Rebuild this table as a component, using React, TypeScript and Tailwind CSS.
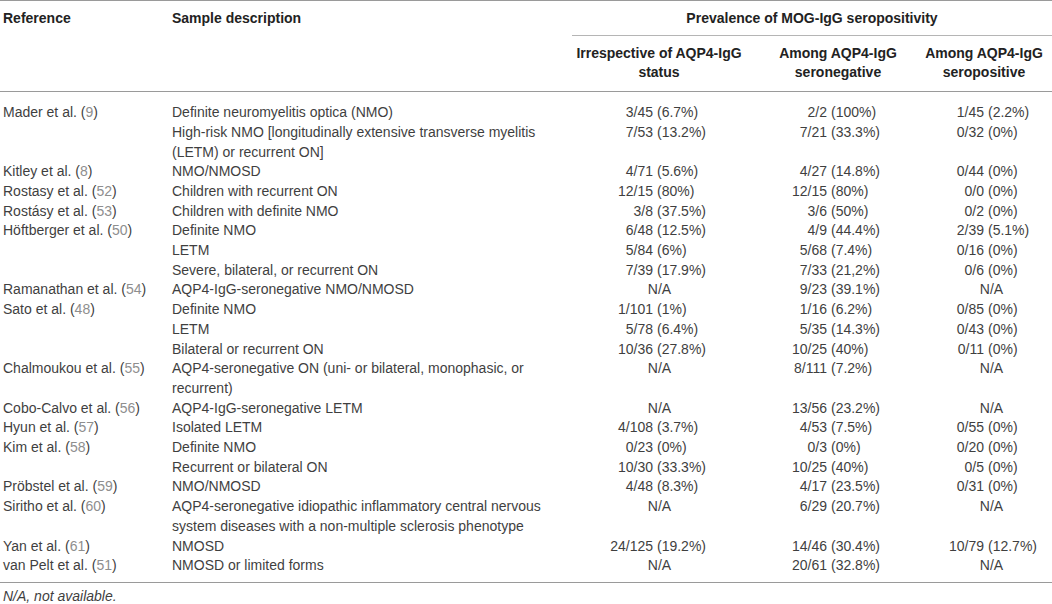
type Row = {
  author?: string;
  cite?: string;
  desc: string[];
  vals: [string, string, string];
};

const rows: Row[] = [
  { author: "Mader et al.", cite: "9", desc: ["Definite neuromyelitis optica (NMO)"], vals: ["3/45 (6.7%)", "2/2 (100%)", "1/45 (2.2%)"] },
  { desc: ["High-risk NMO [longitudinally extensive transverse myelitis", "(LETM) or recurrent ON]"], vals: ["7/53 (13.2%)", "7/21 (33.3%)", "0/32 (0%)"] },
  { author: "Kitley et al.", cite: "8", desc: ["NMO/NMOSD"], vals: ["4/71 (5.6%)", "4/27 (14.8%)", "0/44 (0%)"] },
  { author: "Rostasy et al.", cite: "52", desc: ["Children with recurrent ON"], vals: ["12/15 (80%)", "12/15 (80%)", "0/0 (0%)"] },
  { author: "Rostásy et al.", cite: "53", desc: ["Children with definite NMO"], vals: ["3/8 (37.5%)", "3/6 (50%)", "0/2 (0%)"] },
  { author: "Höftberger et al.", cite: "50", desc: ["Definite NMO"], vals: ["6/48 (12.5%)", "4/9 (44.4%)", "2/39 (5.1%)"] },
  { desc: ["LETM"], vals: ["5/84 (6%)", "5/68 (7.4%)", "0/16 (0%)"] },
  { desc: ["Severe, bilateral, or recurrent ON"], vals: ["7/39 (17.9%)", "7/33 (21,2%)", "0/6 (0%)"] },
  { author: "Ramanathan et al.", cite: "54", desc: ["AQP4-IgG-seronegative NMO/NMOSD"], vals: ["N/A", "9/23 (39.1%)", "N/A"] },
  { author: "Sato et al.", cite: "48", desc: ["Definite NMO"], vals: ["1/101 (1%)", "1/16 (6.2%)", "0/85 (0%)"] },
  { desc: ["LETM"], vals: ["5/78 (6.4%)", "5/35 (14.3%)", "0/43 (0%)"] },
  { desc: ["Bilateral or recurrent ON"], vals: ["10/36 (27.8%)", "10/25 (40%)", "0/11 (0%)"] },
  { author: "Chalmoukou et al.", cite: "55", desc: ["AQP4-seronegative ON (uni- or bilateral, monophasic, or", "recurrent)"], vals: ["N/A", "8/111 (7.2%)", "N/A"] },
  { author: "Cobo-Calvo et al.", cite: "56", desc: ["AQP4-IgG-seronegative LETM"], vals: ["N/A", "13/56 (23.2%)", "N/A"] },
  { author: "Hyun et al.", cite: "57", desc: ["Isolated LETM"], vals: ["4/108 (3.7%)", "4/53 (7.5%)", "0/55 (0%)"] },
  { author: "Kim et al.", cite: "58", desc: ["Definite NMO"], vals: ["0/23 (0%)", "0/3 (0%)", "0/20 (0%)"] },
  { desc: ["Recurrent or bilateral ON"], vals: ["10/30 (33.3%)", "10/25 (40%)", "0/5 (0%)"] },
  { author: "Pröbstel et al.", cite: "59", desc: ["NMO/NMOSD"], vals: ["4/48 (8.3%)", "4/17 (23.5%)", "0/31 (0%)"] },
  { author: "Siritho et al.", cite: "60", desc: ["AQP4-seronegative idiopathic inflammatory central nervous", "system diseases with a non-multiple sclerosis phenotype"], vals: ["N/A", "6/29 (20.7%)", "N/A"] },
  { author: "Yan et al.", cite: "61", desc: ["NMOSD"], vals: ["24/125 (19.2%)", "14/46 (30.4%)", "10/79 (12.7%)"] },
  { author: "van Pelt et al.", cite: "51", desc: ["NMOSD or limited forms"], vals: ["N/A", "20/61 (32.8%)", "N/A"] },
];

// fraction is right aligned so the "(" of every value lines up in a column
function Value({ v, col }: { v: string; col: number }) {
  if (v === "N/A") {
    return (
      <div className={col === 2 ? "w-[143px] text-center" : "w-[175px] text-center"}>N/A</div>
    );
  }
  const i = v.indexOf(" ");
  return (
    <div className="flex whitespace-nowrap">
      <span className={col === 2 ? "w-[64px] text-right" : "w-[81px] text-right"}>{v.slice(0, i)}</span>
      <span className="ml-[4px]">{v.slice(i + 1)}</span>
    </div>
  );
}

export default function App() {
  return (
    <div className="w-[1052px] h-[604px] bg-white overflow-hidden text-[14px] leading-[19.7px] text-[#3f3f3f]" style={{ fontFamily: '"Liberation Sans", Arial, sans-serif' }}>
      <table className="w-[1052px] table-fixed border-collapse border-t border-[#9a9a9a]">
        <colgroup>
          <col className="w-[172px]" />
          <col className="w-[400px]" />
          <col className="w-[174px]" />
          <col className="w-[174px]" />
          <col className="w-[132px]" />
        </colgroup>
        <thead className="font-bold text-[#222]">
          <tr>
            <th rowSpan={2} className="align-top text-left font-bold pl-[3px] pt-[8px] border-b border-[#9a9a9a]">Reference</th>
            <th rowSpan={2} className="align-top text-left font-bold pt-[8px] border-b border-[#9a9a9a]">Sample description</th>
            <th colSpan={3} className="text-center font-bold pt-[8px] pb-[6px] border-b border-[#b5b5b5]">
              Prevalence of MOG-IgG seropositivity
            </th>
          </tr>
          <tr className="border-b border-[#9a9a9a]">
            <th className="align-top text-center font-bold pt-[8px] pb-[8px] whitespace-nowrap">Irrespective of AQP4-IgG<br />status</th>
            <th className="align-top text-center font-bold pt-[8px] pb-[8px] pl-[10px] whitespace-nowrap">Among AQP4-IgG<br />seronegative</th>
            <th className="align-top text-center font-bold pt-[8px] pb-[8px] pr-[4px] whitespace-nowrap">Among AQP4-IgG<br />seropositive</th>
          </tr>
        </thead>
        <tbody className="border-b border-[#9a9a9a]">
          {rows.map((r, idx) => {
            const pad = idx === 0 ? "pt-[11px]" : idx === rows.length - 1 ? "pb-[6px]" : "";
            return (
              <tr key={idx}>
                <td className={`align-top pl-[3px] whitespace-nowrap ${pad}`}>
                  {r.author && (
                    <>
                      {r.author} (<span className="text-[#8e8e8e]">{r.cite}</span>)
                    </>
                  )}
                </td>
                <td className={`align-top whitespace-nowrap ${pad}`}>
                  {r.desc.map((d, j) => (
                    <div key={j}>{d}</div>
                  ))}
                </td>
                {r.vals.map((v, j) => (
                  <td key={j} className={`align-top ${pad}`}>
                    <Value v={v} col={j} />
                  </td>
                ))}
              </tr>
            );
          })}
        </tbody>
      </table>
      <p className="italic pl-[3px] mt-[4px]">N/A, not available.</p>
    </div>
  );
}
